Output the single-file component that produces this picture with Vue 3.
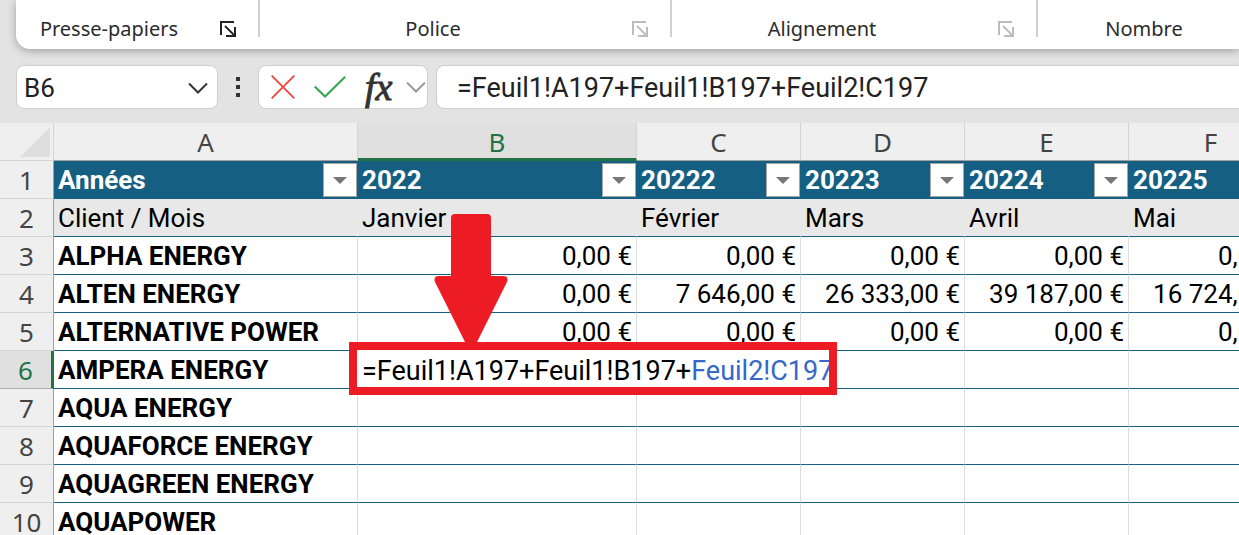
<script setup>
import { ref } from 'vue'

const groups = [
  { id: 'clipboard', label: 'Presse-papiers', active: true },
  { id: 'font', label: 'Police' },
  { id: 'align', label: 'Alignement' },
  { id: 'number', label: 'Nombre' },
]

const cellName = ref('B6')
const formula = ref('=Feuil1!A197+Feuil1!B197+Feuil2!C197')

const columns = ['A', 'B', 'C', 'D', 'E', 'F']
const years = ['Années', '2022', '20222', '20223', '20224', '20225']
const months = ['Client / Mois', 'Janvier', 'Février', 'Mars', 'Avril', 'Mai']
const zero = '0,00\u00a0€'
const rows = [
  { n: 3, name: 'ALPHA ENERGY', values: [zero, zero, zero, zero, zero] },
  {
    n: 4,
    name: 'ALTEN ENERGY',
    values: [zero, '7\u00a0646,00\u00a0€', '26\u00a0333,00\u00a0€', '39\u00a0187,00\u00a0€', '16\u00a0724,00\u00a0€'],
  },
  { n: 5, name: 'ALTERNATIVE POWER', values: [zero, zero, zero, zero, zero] },
  { n: 6, name: 'AMPERA ENERGY', values: ['', '', '', '', ''] },
  { n: 7, name: 'AQUA ENERGY', values: ['', '', '', '', ''] },
  { n: 8, name: 'AQUAFORCE ENERGY', values: ['', '', '', '', ''] },
  { n: 9, name: 'AQUAGREEN ENERGY', values: ['', '', '', '', ''] },
  { n: 10, name: 'AQUAPOWER', values: ['', '', '', '', ''] },
]
</script>

<template>
  <div class="app">
    <header class="ribbon">
      <section v-for="g in groups" :key="g.id" class="group" :class="[g.id, { active: g.active }]">
        <span class="group-label">{{ g.label }}</span>
        <button class="launcher" type="button" :aria-label="'Paramètres ' + g.label">
          <svg width="16" height="16" viewBox="0 0 16 16" fill="none" stroke="currentColor" stroke-width="2">
            <path d="M14 1H1V14" />
            <path d="M5 5L14 14" stroke-width="1.8" />
            <path d="M15 6V15H6" />
          </svg>
        </button>
      </section>
    </header>

    <div class="formula-bar">
      <div class="box name-box">
        <input v-model="cellName" class="name-input" type="text" aria-label="Zone Nom" />
        <button class="tool" type="button" aria-label="Liste des noms">
          <svg width="20" height="12" viewBox="0 0 20 12" fill="none" stroke="#333" stroke-width="2">
            <path d="M1 1.5L10 10.5L19 1.5" />
          </svg>
        </button>
      </div>
      <div class="dots"><i></i><i></i><i></i></div>
      <div class="box tools">
        <button class="tool" type="button" aria-label="Annuler">
          <svg width="24" height="24" viewBox="0 0 24 24" fill="none" stroke="#ee4440" stroke-width="1.8">
            <path d="M.7 .7L23.3 23.3M23.3 .7L.7 23.3" />
          </svg>
        </button>
        <button class="tool" type="button" aria-label="Entrer">
          <svg width="32" height="22" viewBox="0 0 32 22" fill="none" stroke="#36a350" stroke-width="2">
            <path d="M.8 10.5L11 20.5L31.2 .8" />
          </svg>
        </button>
        <button class="tool fx" type="button" aria-label="Insérer une fonction">fx</button>
        <button class="tool more" type="button" aria-label="Plus de fonctions">
          <svg width="20" height="12" viewBox="0 0 20 12" fill="none" stroke="#999" stroke-width="2">
            <path d="M1 1.5L10 10.5L19 1.5" />
          </svg>
        </button>
      </div>
      <input v-model="formula" class="box formula-input" type="text" aria-label="Barre de formule" />
    </div>

    <main class="sheet">
      <table>
        <colgroup>
          <col class="c-head" />
          <col class="c-a" />
          <col class="c-b" />
          <col v-for="c in 4" :key="c" class="c-n" />
        </colgroup>
        <thead>
          <tr>
            <th class="corner">
              <svg width="30" height="30" viewBox="0 0 30 30"><path d="M30 0V30H0Z" fill="#dedede" /></svg>
            </th>
            <th v-for="c in columns" :key="c" class="col-head" :class="{ selected: c === 'B' }" scope="col">{{ c }}</th>
          </tr>
        </thead>
        <tbody>
          <tr class="years">
            <th class="row-head" scope="row">1</th>
            <td v-for="y in years" :key="y">
              <div class="year">
                <span>{{ y }}</span>
                <button class="filter" type="button" :aria-label="'Filtrer ' + y">
                  <svg width="14" height="7" viewBox="0 0 14 7"><path d="M0 0H14L7 7Z" fill="#767676" /></svg>
                </button>
              </div>
            </td>
          </tr>
          <tr class="months">
            <th class="row-head" scope="row">2</th>
            <td v-for="m in months" :key="m">{{ m }}</td>
          </tr>
          <tr v-for="r in rows" :key="r.n">
            <th class="row-head" :class="{ selected: r.n === 6 }" scope="row">{{ r.n }}</th>
            <td class="client">{{ r.name }}</td>
            <td v-for="(v, i) in r.values" :key="i" class="amount" :class="{ editing: r.n === 6 && i === 0 }">
              <template v-if="r.n === 6 && i === 0">
                <div class="editor">=Feuil1!A197+Feuil1!B197+<span class="reference">Feuil2!C197</span></div>
                <svg class="arrow" width="74" height="136" viewBox="0 0 74 136">
                  <path
                    d="M21 0H53Q57 0 57 4V62H69Q75 62 73 68L41 132V136H33V132L1 68Q-1 62 5 62H17V4Q17 0 21 0Z"
                    fill="#ed1c24"
                  />
                </svg>
              </template>
              <template v-else>{{ v }}</template>
            </td>
          </tr>
        </tbody>
      </table>
    </main>
  </div>
</template>

<style>
body {
  margin: 0;
}
</style>

<style scoped>
.app {
  height: 100vh;
  overflow: hidden;
  display: flex;
  flex-direction: column;
  background: #e3e3e3;
  font-family: Roboto, "Liberation Sans", sans-serif;
  font-size: 26px;
  color: #000;
}
button,
input {
  font: inherit;
  color: inherit;
  margin: 0;
  padding: 0;
  border: 0;
  background: none;
  outline: none;
}
svg {
  display: block;
}
.ribbon {
  flex: none;
  display: flex;
  height: 49px;
  margin-left: 16px;
  background: #fff;
  border-bottom-left-radius: 14px;
  box-shadow: 0 2px 8px rgba(0, 0, 0, 0.3);
  font-family: "Noto Sans", "Open Sans", sans-serif;
  font-size: 20px;
}
.group {
  flex: none;
  box-sizing: border-box;
  display: flex;
  align-items: center;
  height: 37px;
  padding: 20px 22px 0 0;
  border-right: 2px solid #d0d0d0;
  color: #bcbcbc;
}
.group.active {
  color: #222;
}
.clipboard {
  width: 244px;
  padding-left: 8px;
}
.font {
  width: 412px;
}
.align {
  width: 366px;
}
.number {
  width: 278px;
}
.group-label {
  flex: 1;
  margin-right: 26px;
  text-align: center;
  white-space: nowrap;
  color: #2b2b2b;
}
.formula-bar {
  flex: none;
  display: flex;
  height: 44px;
  margin: 16px 0 14px 16px;
  color: #222;
}
.box {
  box-sizing: border-box;
  border: 1px solid #cfcfcf;
  border-radius: 8px;
  background: #fff;
}
.name-box {
  width: 202px;
  display: flex;
  align-items: center;
  padding: 2px 9px 0 7px;
}
.name-input {
  flex: 1;
  min-width: 0;
}
.tool {
  flex: none;
}
.dots {
  width: 40px;
  display: flex;
  flex-direction: column;
  align-items: center;
  justify-content: center;
  gap: 4px;
}
.dots i {
  width: 4px;
  height: 4px;
  background: #333;
}
.tools {
  width: 170px;
  display: flex;
  align-items: center;
  gap: 19px;
  padding: 0 3px 0 12px;
}
.more {
  margin-left: auto;
}
.fx {
  width: 22px;
  font-family: "Liberation Serif", serif;
  font-style: italic;
  font-size: 38px;
  line-height: 40px;
  -webkit-text-stroke: 1px #333;
  color: #333;
}
.formula-input {
  flex: 1;
  min-width: 0;
  margin-left: 8px;
  padding: 2px 20px 0;
  font-size: 27px;
  border-right: 0;
  border-top-right-radius: 0;
  border-bottom-right-radius: 0;
}
.sheet {
  flex: 1;
  min-height: 0;
  overflow: hidden;
  background: #fff;
}
table {
  table-layout: fixed;
  width: 1293px;
  border-collapse: separate;
  border-spacing: 0;
}
.c-head {
  width: 54px;
}
.c-a {
  width: 304px;
}
.c-b {
  width: 279px;
}
.c-n {
  width: 164px;
}
th,
td {
  box-sizing: border-box;
  height: 38px;
  padding: 1px 4px 0;
  line-height: 36px;
  white-space: nowrap;
  text-align: left;
}
.corner,
.col-head,
.row-head {
  padding: 0;
  text-align: center;
  font-family: "Noto Sans", "Open Sans", sans-serif;
  font-weight: 400;
  background: #efefef;
  color: #444;
}
.corner {
  border-right: 1px solid #d4d4d4;
  border-bottom: 1px solid #d4d4d4;
}
.corner svg {
  margin-left: 20px;
}
.col-head {
  padding-top: 1px;
  border-right: 1px solid #d4d4d4;
  border-bottom: 1px solid #a0a0a0;
}
.col-head.selected {
  padding-top: 3px;
  border-bottom: 3px solid #217346;
  line-height: 32px;
  background: #e0e0e0;
  color: #217346;
}
.row-head {
  border-right: 1px solid #a0a0a0;
  border-bottom: 1px solid #d4d4d4;
}
.row-head.selected {
  border-right: 3px solid #217346;
  border-bottom-color: #b0b0b0;
  background: #e0e0e0;
  color: #217346;
}
td {
  border-right: 1px solid #dcdcdc;
  border-bottom: 1px solid #156082;
}
.years td {
  padding-right: 0;
  border-right-color: #156082;
  background: #156082;
  color: #fff;
  font-weight: 700;
}
.year {
  display: flex;
  align-items: center;
  justify-content: space-between;
}
.filter {
  box-sizing: border-box;
  width: 34px;
  height: 34px;
  display: flex;
  align-items: center;
  justify-content: center;
  border: 1px solid #a6a6a6;
  background: #fff;
}
.months td {
  border-right-color: #e8e8e8;
  background: #e8e8e8;
}
.client {
  font-weight: 700;
}
.amount {
  text-align: right;
}
.editing {
  position: relative;
}
.editor {
  position: absolute;
  z-index: 1;
  top: -9px;
  left: -9px;
  box-sizing: border-box;
  width: 488px;
  height: 53px;
  padding: 2px 0 0 5px;
  border: 8px solid #ed1c24;
  background: #fff;
  font-size: 27px;
  line-height: 38px;
  text-align: left;
  overflow: hidden;
}
.reference {
  color: #3568c8;
}
.arrow {
  position: absolute;
  z-index: 2;
  left: 76px;
  bottom: 38px;
}
</style>
